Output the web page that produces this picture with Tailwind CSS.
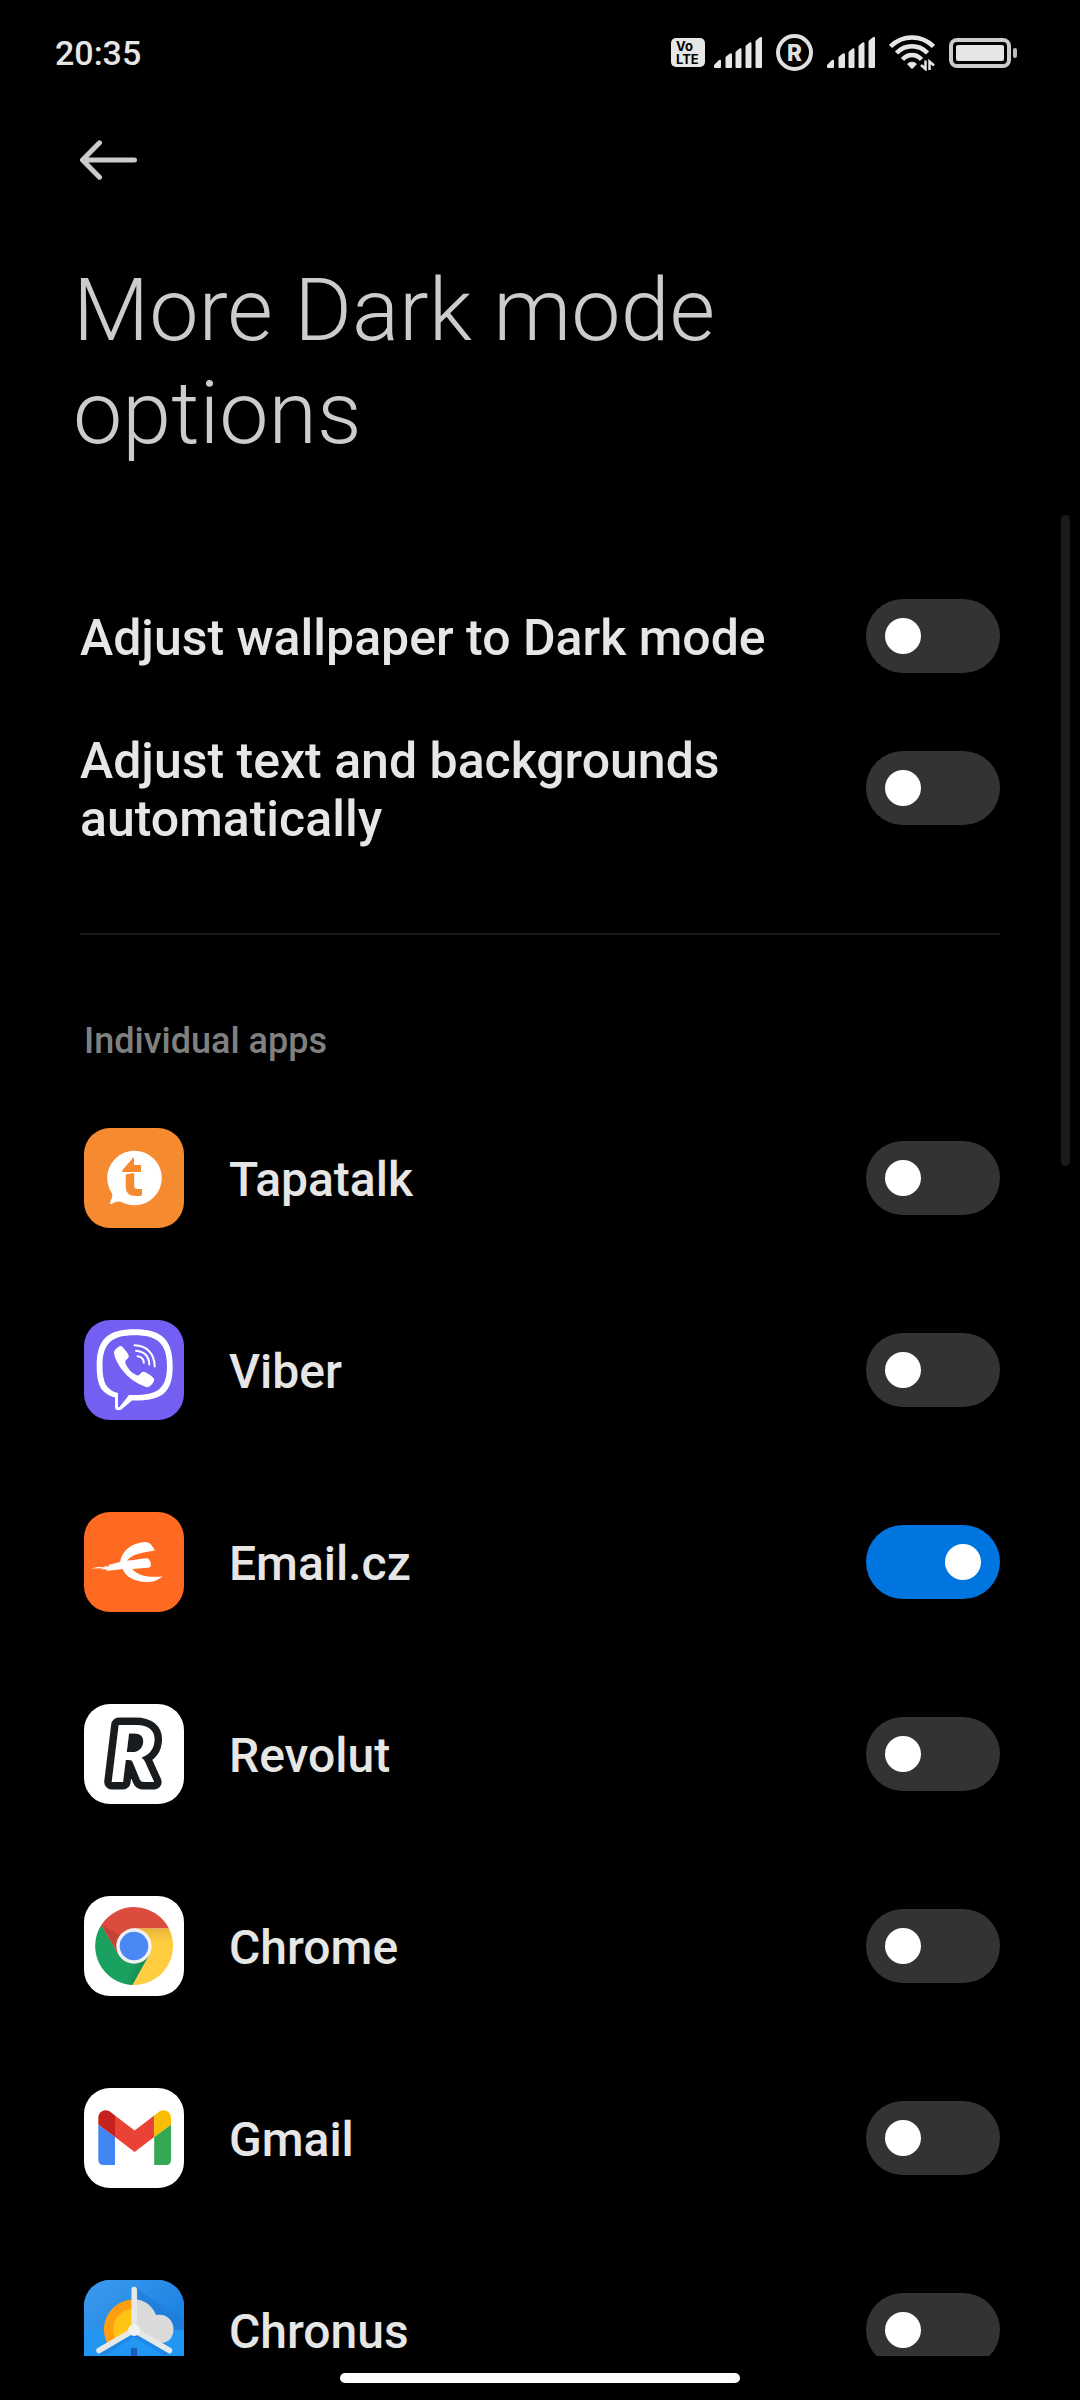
<!DOCTYPE html>
<html lang="en">
<head>
  <meta charset="UTF-8">
  <meta name="viewport" content="width=device-width, initial-scale=1">
  <title>More Dark mode options</title>
  <script src="https://cdn.jsdelivr.net/npm/@tailwindcss/browser@4"></script>
</head>
<body class="h-screen flex flex-col overflow-hidden bg-black text-[#e6e6e6] font-['Roboto',sans-serif] select-none">

  <!-- Status bar -->
  <div class="flex h-[105px] shrink-0 items-center justify-between pl-[55px] pr-[63px]">
    <span class="text-[34px] leading-10 font-medium">20:35</span>
    <div class="flex items-center gap-[14px]">
      <div class="flex items-center gap-[9px]">
        <svg class="h-[30px] w-[34px]" viewBox="0 0 34 30" fill="#e6e6e6">
          <rect width="34" height="29" rx="5"/>
          <g fill="#000" font-family="Inter, sans-serif" font-weight="700">
            <text x="5" y="13" font-size="13">Vo</text>
            <text x="5" y="26" font-size="13">LTE</text>
          </g>
        </svg>
        <svg class="h-[31px] w-12" viewBox="0 0 48 31" fill="#e6e6e6">
          <path d="M0 28l5-5q2-1 2 1v6q0 1-1 1H1q-1 0-1-1zM11.500 20l4-3.300q2.500-1 2.500 1V30q0 1-1 1h-4.500q-1 0-1-1zM21.500 15l4-3.500q2-.8 2 1V30q0 1-1 1h-4q-1 0-1-1zM31.500 9l4-3.500q2-.8 2 1V30q0 1-1 1h-4q-1 0-1-1zM41.500 4l4-3.500Q48-.8 48 1v29q0 1-1 1h-4.500q-1 0-1-1z"/>
        </svg>
      </div>
      <svg class="h-[37px] w-[37px]" viewBox="0 0 37 37">
        <circle cx="18.500" cy="18.500" r="16.500" fill="none" stroke="#e0e0e0" stroke-width="4"/>
        <text x="18.500" y="26.500" text-anchor="middle" font-family="Inter, sans-serif" font-size="22.500" font-weight="800" fill="#e0e0e0">R</text>
      </svg>
      <svg class="h-[31px] w-12" viewBox="0 0 48 31" fill="#e6e6e6">
        <path d="M0 28l5-5q2-1 2 1v6q0 1-1 1H1q-1 0-1-1zM11.500 20l4-3.300q2.500-1 2.500 1V30q0 1-1 1h-4.500q-1 0-1-1zM21.500 15l4-3.500q2-.8 2 1V30q0 1-1 1h-4q-1 0-1-1zM31.500 9l4-3.500q2-.8 2 1V30q0 1-1 1h-4q-1 0-1-1zM41.500 4l4-3.500Q48-.8 48 1v29q0 1-1 1h-4.500q-1 0-1-1z"/>
      </svg>
      <svg class="h-9 w-[46px]" viewBox="0 0 46 36">
        <g fill="none" stroke="#e6e6e6" stroke-width="4.500">
          <path d="M1.500 11.500Q10.500 2.500 23 2.500T44.500 11.500"/>
          <path d="M7.500 18Q14 11.300 23 11.300T38.500 18"/>
          <path d="M13.500 24.500Q17.500 20 23 20T32.500 24.500"/>
        </g>
        <path d="M18 29q5-4.500 10 0l-4 4.300q-1 1-2 0z" fill="#e6e6e6"/>
        <path d="M36.500 25.500V34l-4.500-4M40.500 35v-8.500l4.500 4" fill="none" stroke="#e6e6e6" stroke-width="2.500"/>
      </svg>
      <svg class="h-[30px] w-[68px]" viewBox="0 0 68 30">
        <rect x="2" y="2" width="58" height="26" rx="6" fill="none" stroke="#ccc" stroke-width="4"/>
        <rect x="7" y="7" width="48" height="16" rx="2" fill="#e6e6e6"/>
        <rect x="64" y="10" width="4" height="10" rx="2" fill="#bbb"/>
      </svg>
    </div>
  </div>

  <!-- Header -->
  <header class="shrink-0 pb-[51px] pl-[73px] pr-20">
    <button type="button" aria-label="Back" class="flex h-[110px] items-center pl-[7px]">
      <svg class="h-10 w-[58px]" viewBox="0 0 58 40" fill="none" stroke="#ccc" stroke-width="5" stroke-linecap="round" stroke-linejoin="round">
        <path d="M19.500 2.800L2.500 20l17 17.200M4 20h50.500"/>
      </svg>
    </button>
    <h1 class="mt-[43px] max-w-[760px] text-[88px] leading-[103px] font-light text-[#ccc]">More Dark mode options</h1>
  </header>

  <!-- Settings list -->
  <main class="relative flex-1 overflow-hidden pt-[45px] pl-20 pr-20">
    <div class="absolute top-0 right-[10px] h-[651px] w-[9px] rounded-full bg-[#1a1a1a]"></div>

    <label class="flex h-[152px] items-center justify-between gap-24">
      <span class="pt-[3px] text-[50px] leading-[58px] font-medium">Adjust wallpaper to Dark mode</span>
      <input type="checkbox" role="switch" class="h-[74px] w-[134px] shrink-0 appearance-none rounded-full bg-[#333] before:mt-[19px] before:ml-[19px] before:block before:size-9 before:rounded-full before:bg-white checked:bg-[#0074df] checked:before:ml-[79px]">
    </label>
    <label class="flex h-[152px] items-center justify-between gap-24">
      <span class="pt-[3px] text-[50px] leading-[58px] font-medium">Adjust text and backgrounds automatically</span>
      <input type="checkbox" role="switch" class="h-[74px] w-[134px] shrink-0 appearance-none rounded-full bg-[#333] before:mt-[19px] before:ml-[19px] before:block before:size-9 before:rounded-full before:bg-white checked:bg-[#0074df] checked:before:ml-[79px]">
    </label>

    <hr class="mt-[69px] border-t-2 border-[#1a1a1a]">

    <h2 class="mt-[84px] mb-[19px] pl-1 text-[36px] leading-[44px] font-medium text-[#808080]">Individual apps</h2>

    <ul class="pl-1">
      <li>
        <label class="flex h-48 items-center">
          <svg class="size-[100px] rounded-[26px]" viewBox="0 0 100 100">
            <rect width="100" height="100" fill="#f68a30"/>
            <circle cx="50.500" cy="50" r="27.300" fill="#fff"/>
            <path d="M28 62q1.500 6-2 12.500-.5 2 1.500 1.500Q33 72.500 39 74z" fill="#fff"/>
            <path d="M49 29.800q1-1 1 .5V37h7v7H38.500q-1-.5 0-2zM41.700 46.500l8.500-1.500v13q0 3 3 3h4.800v5q0 2-3 2h-3q-10.300 0-10.300-9z" fill="#f68a30"/>
          </svg>
          <span class="flex-1 pl-[45px] pt-[3px] text-[48px] leading-[56px] font-medium">Tapatalk</span>
          <input type="checkbox" role="switch" class="h-[74px] w-[134px] shrink-0 appearance-none rounded-full bg-[#333] before:mt-[19px] before:ml-[19px] before:block before:size-9 before:rounded-full before:bg-white checked:bg-[#0074df] checked:before:ml-[79px]">
        </label>
      </li>
      <li>
        <label class="flex h-48 items-center">
          <svg class="size-[100px] rounded-[26px]" viewBox="0 0 100 100">
            <rect width="100" height="100" fill="#7360f2"/>
            <path d="M12.700 46C12.700 19 24 9.300 50.500 9.300S88.700 19 88.700 46 78 80.500 50 80.500h-2L37.500 89.500Q31.500 92 31 87V77.500C17 73.500 12.700 65 12.700 46z" fill="#fff"/>
            <path d="M18.500 46C18.500 23 28 15.300 50.500 15.300S83 23 83 46 73 75 50 75h-5L35.500 87q-1.500 1-1.500-1V73C22 70 18.500 62 18.500 46z" fill="#7360f2"/>
            <path d="M30 33q-.5-3 5-6.500 2-1.200 4 1 4 4.500 5.500 7.500 1 2.500-2 4.500-2 1.500-1 4Q45 52 53 55.500q2 .5 3.500-2 1.500-2.500 4.500-1.500 5 2.500 8 5.500 2 2 .5 4.500-3.500 6-7.500 5-15-5-25-18.500Q31 40 30 33z" fill="#fff"/>
            <g fill="none" stroke="#fff" stroke-width="2" stroke-linecap="round">
              <path d="M50.500 25.300C63 25.500 70.500 34 70.700 46.500"/>
              <path d="M52 30.700C60.500 31.500 65 36.500 65.300 44.500"/>
              <path d="M53.500 36.200Q59.500 36.700 59.800 42.700"/>
            </g>
          </svg>
          <span class="flex-1 pl-[45px] pt-[3px] text-[48px] leading-[56px] font-medium">Viber</span>
          <input type="checkbox" role="switch" class="h-[74px] w-[134px] shrink-0 appearance-none rounded-full bg-[#333] before:mt-[19px] before:ml-[19px] before:block before:size-9 before:rounded-full before:bg-white checked:bg-[#0074df] checked:before:ml-[79px]">
        </label>
      </li>
      <li>
        <label class="flex h-48 items-center">
          <svg class="size-[100px] rounded-[26px]" viewBox="0 0 100 100">
            <rect width="100" height="100" fill="#fe6a22"/>
            <path d="M36 50C38 39 47 31 61 30q4-.3 6 2.500l3.500 5q.5 1-1 1.200C57 40.500 49 42 43 48.500c6 0 13-2 20-2.300q2 0 3 2.800 1.500 4 .5 5.500-.5 1-2.500 1.200L48 57c7 7.500 17 8.500 30.500 7.500C73 69 68 70 63 70c-12 0-21-5-24.500-13L22 59l2-1.500-8-.2 4-1-13 .2 7-1.500 8 .2-3-1 7 .3-2-1.500z" fill="#fff"/>
          </svg>
          <span class="flex-1 pl-[45px] pt-[3px] text-[48px] leading-[56px] font-medium">Email.cz</span>
          <input type="checkbox" role="switch" checked class="h-[74px] w-[134px] shrink-0 appearance-none rounded-full bg-[#333] before:mt-[19px] before:ml-[19px] before:block before:size-9 before:rounded-full before:bg-white checked:bg-[#0074df] checked:before:ml-[79px]">
        </label>
      </li>
      <li>
        <label class="flex h-48 items-center">
          <svg class="size-[100px] rounded-[26px]" viewBox="0 0 100 100">
            <rect width="100" height="100" fill="#fff"/>
            <text x="25" y="78" font-family="Lato, sans-serif" font-size="79" font-weight="900" font-style="italic" fill="#fff" stroke="#191c1f" stroke-width="15" stroke-linejoin="round" paint-order="stroke">R</text>
          </svg>
          <span class="flex-1 pl-[45px] pt-[3px] text-[48px] leading-[56px] font-medium">Revolut</span>
          <input type="checkbox" role="switch" class="h-[74px] w-[134px] shrink-0 appearance-none rounded-full bg-[#333] before:mt-[19px] before:ml-[19px] before:block before:size-9 before:rounded-full before:bg-white checked:bg-[#0074df] checked:before:ml-[79px]">
        </label>
      </li>
      <li>
        <label class="flex h-48 items-center">
          <svg class="size-[100px] rounded-[26px]" viewBox="0 0 100 100">
            <defs>
              <linearGradient id="yellowShade" x1="0" y1="0" x2="0" y2="1">
                <stop offset="0" stop-color="#e9b53a"/>
                <stop offset="0.250" stop-color="#ffcd40"/>
              </linearGradient>
              <linearGradient id="greenShade" x1="1" y1="0.700" x2="0.600" y2="0.500">
                <stop offset="0" stop-color="#118049"/>
                <stop offset="0.700" stop-color="#1aa15f"/>
              </linearGradient>
            </defs>
            <rect width="100" height="100" fill="#fff"/>
            <path d="M50 32.300h34.800A39 39 0 0 1 48.500 89L65.300 58.800 50 50z" fill="url(#yellowShade)"/>
            <path d="M17.300 29l17.400 29.800L50 50l15.300 8.800L48.500 89A39 39 0 0 1 17.300 29z" fill="url(#greenShade)"/>
            <path d="M17.300 29A39 39 0 0 1 84.800 32.300H50V50l-15.300 8.800z" fill="#db4c3f"/>
            <path d="M17.300 29l17.400 29.800L38 40z" fill="#c54438"/>
            <circle cx="50" cy="50" r="17.700" fill="#f1f1f1"/>
            <circle cx="50" cy="50" r="14.300" fill="#4a89f3"/>
          </svg>
          <span class="flex-1 pl-[45px] pt-[3px] text-[48px] leading-[56px] font-medium">Chrome</span>
          <input type="checkbox" role="switch" class="h-[74px] w-[134px] shrink-0 appearance-none rounded-full bg-[#333] before:mt-[19px] before:ml-[19px] before:block before:size-9 before:rounded-full before:bg-white checked:bg-[#0074df] checked:before:ml-[79px]">
        </label>
      </li>
      <li>
        <label class="flex h-48 items-center">
          <svg class="size-[100px] rounded-[26px]" viewBox="0 0 100 100">
            <rect width="100" height="100" fill="#fff"/>
            <path d="M14.300 36.500L31 49v28H19.500q-5.200 0-5.200-5.200z" fill="#4285f4"/>
            <path d="M87 36.500L70.200 49v28H82q5 0 5-5.200z" fill="#34a853"/>
            <path d="M31 27.500l19.600 15 19.600-15V49L50.600 64 31 49z" fill="#ea4335"/>
            <path d="M14.300 36.500V30c0-7 8-10.500 13.500-5L31 27.500V49z" fill="#c5221f"/>
            <path d="M87 36.500V30c0-7-8-10.500-13.500-5l-3.300 2.500V49z" fill="#fbbc04"/>
          </svg>
          <span class="flex-1 pl-[45px] pt-[3px] text-[48px] leading-[56px] font-medium">Gmail</span>
          <input type="checkbox" role="switch" class="h-[74px] w-[134px] shrink-0 appearance-none rounded-full bg-[#333] before:mt-[19px] before:ml-[19px] before:block before:size-9 before:rounded-full before:bg-white checked:bg-[#0074df] checked:before:ml-[79px]">
        </label>
      </li>
      <li>
        <label class="flex h-48 items-center">
          <svg class="size-[100px] rounded-[26px]" viewBox="0 0 100 100">
            <defs>
              <linearGradient id="sky" x1="0" y1="0" x2="1" y2="0.500">
                <stop offset="0" stop-color="#3d9bee"/>
                <stop offset="1" stop-color="#1e84e2"/>
              </linearGradient>
            </defs>
            <rect width="100" height="100" fill="#2196f3"/>
            <rect width="100" height="50" fill="url(#sky)"/>
            <path d="M53 9l47 31v10H60z" fill="#1f7cd8" opacity=".7"/>
            <path d="M50 19.500a30 30 0 0 0-26 45L50 50z" fill="#ff9f10"/>
            <path d="M50 28.500A21 21 0 0 0 32 60l18-10z" fill="#ffc414"/>
            <path d="M50 19.500c11 0 18 6 22 15.500C82 33 89.500 40 89.500 49S84 63 77 63L50 50z" fill="#dadada"/>
            <path d="M50 50L15 73.500 20 76l30-19 30 19 6-3z" fill="#1771cb" opacity=".35"/>
            <rect x="47" y="68" width="6" height="20" fill="#1c5dbb"/>
            <g stroke="#e6e8e8" stroke-width="5.500" stroke-linecap="round">
              <path d="M50.200 9.500V50L15 70.500M50.200 50L85.500 70.500" fill="none"/>
            </g>
            <circle cx="50.200" cy="50" r="6" fill="#f0f1f1"/>
          </svg>
          <span class="flex-1 pl-[45px] pt-[3px] text-[48px] leading-[56px] font-medium">Chronus</span>
          <input type="checkbox" role="switch" class="h-[74px] w-[134px] shrink-0 appearance-none rounded-full bg-[#333] before:mt-[19px] before:ml-[19px] before:block before:size-9 before:rounded-full before:bg-white checked:bg-[#0074df] checked:before:ml-[79px]">
        </label>
      </li>
    </ul>
  </main>

  <!-- Gesture bar -->
  <footer class="flex h-11 shrink-0 items-center justify-center">
    <div class="h-[10px] w-[400px] rounded-full bg-white"></div>
  </footer>
</body>
</html>
